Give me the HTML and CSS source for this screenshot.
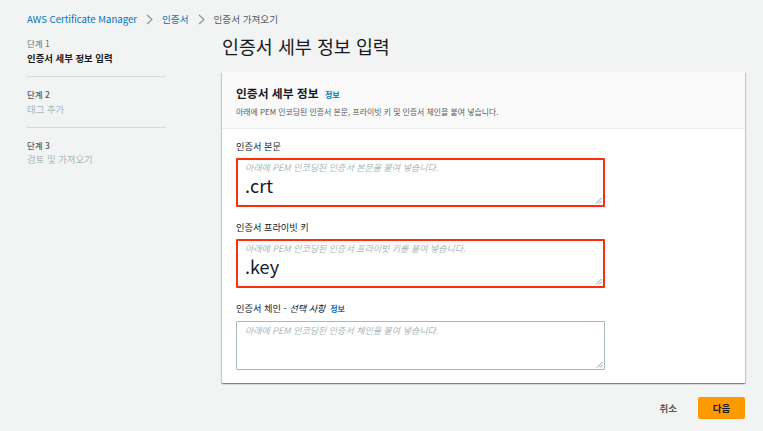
FILE: index.html
```html
<!DOCTYPE html>
<html lang="ko">
<head>
<meta charset="utf-8">
<link rel="stylesheet" href="styles.css">
</head>
<body>
<nav class="crumbs">
  <a class="crumb-link">AWS Certificate Manager</a>
  <svg class="chev" width="7" height="11" viewBox="0 0 7 11"><path d="M1 1 L6 5.5 L1 10" fill="none" stroke="#879596" stroke-width="1.1"/></svg>
  <a class="crumb-link">인증서</a>
  <svg class="chev" width="7" height="11" viewBox="0 0 7 11"><path d="M1 1 L6 5.5 L1 10" fill="none" stroke="#879596" stroke-width="1.1"/></svg>
  <span class="crumb-current">인증서 가져오기</span>
</nav>
<div class="layout">
  <aside class="steps">
    <div class="step">
      <div class="step-num">단계 1</div>
      <div class="step-name active">인증서 세부 정보 입력</div>
    </div>
    <div class="step">
      <div class="step-num dark">단계 2</div>
      <div class="step-name">태그 추가</div>
    </div>
    <div class="step last">
      <div class="step-num dark">단계 3</div>
      <div class="step-name">검토 및 가져오기</div>
    </div>
  </aside>
  <main class="main">
    <h1 class="title">인증서 세부 정보 입력</h1>
    <section class="card">
      <header class="card-head">
        <h2 class="card-title">인증서 세부 정보 <a class="info">정보</a></h2>
        <p class="card-desc">아래에 PEM 인코딩된 인증서 본문, 프라이빗 키 및 인증서 체인을 붙여 넣습니다.</p>
      </header>
      <div class="card-body">
        <div class="field">
          <label class="label">인증서 본문</label>
          <div class="area marked">
            <span class="ph">아래에 PEM 인코딩된 인증서 본문을 붙여 넣습니다.</span>
            <span class="val">.crt</span>
            <svg class="grip" width="7" height="7" viewBox="0 0 7 7"><path d="M6.5 1 L1 6.5 M6.5 4 L4 6.5" stroke="#7d8998" stroke-width="0.9"/></svg>
          </div>
        </div>
        <div class="field">
          <label class="label">인증서 프라이빗 키</label>
          <div class="area marked">
            <span class="ph">아래에 PEM 인코딩된 인증서 프라이빗 키를 붙여 넣습니다.</span>
            <span class="val">.key</span>
            <svg class="grip" width="7" height="7" viewBox="0 0 7 7"><path d="M6.5 1 L1 6.5 M6.5 4 L4 6.5" stroke="#7d8998" stroke-width="0.9"/></svg>
          </div>
        </div>
        <div class="field">
          <label class="label">인증서 체인 - <i class="opt">선택 사항</i> <a class="info">정보</a></label>
          <div class="area">
            <span class="ph">아래에 PEM 인코딩된 인증서 체인을 붙여 넣습니다.</span>
            <svg class="grip" width="7" height="7" viewBox="0 0 7 7"><path d="M6.5 1 L1 6.5 M6.5 4 L4 6.5" stroke="#7d8998" stroke-width="0.9"/></svg>
          </div>
        </div>
      </div>
    </section>
    <div class="actions">
      <button class="btn-link">취소</button>
      <button class="btn-primary">다음</button>
    </div>
  </main>
</div>
</body>
</html>
```
FILE: styles.css
```css
* { box-sizing: border-box; }
html, body { margin: 0; padding: 0; }
body {
  background: #f2f3f3;
  font-family: "Noto Sans CJK KR", "Noto Sans", "Liberation Sans", sans-serif;
  color: #16191f;
  width: 763px;
  height: 431px;
  overflow: hidden;
}
.crumbs {
  display: flex;
  align-items: center;
  gap: 9px;
  padding: 11px 0 0 27px;
  height: 27px;
  font-size: 9.6px;
  line-height: 16px;
}
.crumb-link { color: #0073bb; }
.crumb-current { color: #545b64; }
.chev { display: block; }
.layout {
  display: flex;
  align-items: flex-start;
}
.steps {
  width: 139px;
  margin-left: 27px;
  padding-top: 9px;
}
.step {
  border-bottom: 1px solid #d5dbdb;
  padding-bottom: 10px;
  margin-bottom: 10px;
}
.step.last { border-bottom: 0; }
.step-num {
  font-size: 8.5px;
  line-height: 14px;
  color: #687078;
}
.step-num.dark { color: #545b64; font-weight: 500; }
.step-name {
  font-size: 9.4px;
  line-height: 16px;
  color: #aab7b8;
}
.step-name.active { color: #16191f; font-weight: 700; }
.step.last .step-name { margin-top: -1px; }
.main {
  width: 523px;
  margin-left: 56px;
}
.title {
  margin: 0;
  font-size: 18.4px;
  font-weight: 400;
  line-height: 26px;
  padding-top: 6px;
  height: 45px;
  color: #16191f;
}
.card {
  background: #fff;
  box-shadow: 0 1px 1px 0 rgba(0, 28, 36, 0.3), 1px 1px 1px 0 rgba(0, 28, 36, 0.15), -1px 1px 1px 0 rgba(0, 28, 36, 0.15);
}
.card-head {
  background: #fafafa;
  border-bottom: 1px solid #eaeded;
  padding: 12px 14px 0;
  height: 57px;
}
.card-title {
  margin: 0;
  font-size: 11.8px;
  line-height: 18px;
  font-weight: 700;
  color: #16191f;
}
.info {
  color: #0073bb;
  font-size: 8px;
  font-weight: 700;
  margin-left: 3px;
}
.card-desc {
  margin: 1px 0 0;
  font-size: 7.9px;
  line-height: 14px;
  color: #545b64;
}
.card-body {
  padding: 10px 14px 13px;
  display: flex;
  flex-direction: column;
  gap: 13px;
}
.field { display: flex; flex-direction: column; gap: 5px; }
.label {
  font-size: 9.2px;
  line-height: 14px;
  color: #16191f;
}
.opt { font-style: italic; }
.label .info { margin-left: 2px; }
.area {
  position: relative;
  width: 369px;
  height: 49px;
  border: 1px solid #aab7b8;
  border-radius: 1px;
  background: #fff;
  padding: 2px 8px 0;
  display: flex;
  flex-direction: column;
}
.area.marked { border: 2px solid #ff2d10; padding: 1px 7px 0; height: 49px; }
.ph {
  font-size: 9px;
  line-height: 14px;
  font-style: italic;
  color: #aab7b8;
}
.val {
  font-size: 18px;
  line-height: 20px;
  color: #16191f;
  margin-top: 0;
}
.grip {
  position: absolute;
  right: 1px;
  bottom: 1px;
}
.actions {
  display: flex;
  justify-content: flex-end;
  align-items: center;
  gap: 21px;
  margin-top: 14px;
}
.btn-link {
  background: none;
  border: 0;
  padding: 0;
  font-family: inherit;
  font-size: 9.5px;
  font-weight: 700;
  color: #545b64;
}
.btn-primary {
  background: #ff9900;
  border: 0;
  border-radius: 2px;
  width: 47px;
  height: 22px;
  padding: 0;
  font-family: inherit;
  font-size: 9.5px;
  font-weight: 700;
  color: #16191f;
}
```
